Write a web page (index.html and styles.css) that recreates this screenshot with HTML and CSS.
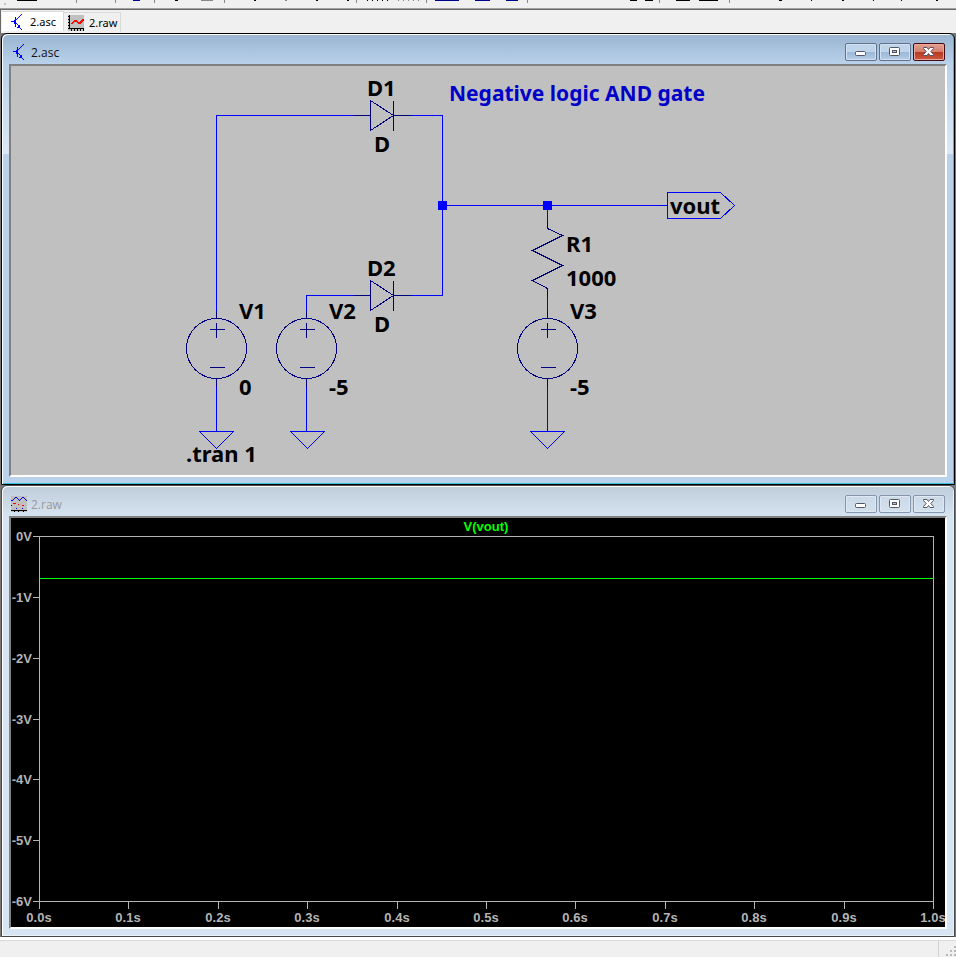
FILE: index.html
```html
<!DOCTYPE html>
<html lang="en">
<head>
<meta charset="utf-8">
<title>2.asc</title>
<link rel="stylesheet" href="styles.css">
</head>
<body>
<svg class="defs" width="0" height="0" aria-hidden="true">
  <symbol id="icon-schematic" viewBox="0 0 16 16">
    <path d="M2 7h4v1H2zM6 3h1v10H6zM5 6h1v4H5zM7 5h1v1H7zM8 4h1v1H8zM9 3h1v1H9zM10 2h1v1h-1zM11 1h1v1h-1zM12 0h1v1h-1zM7 9h1v1H7zM8 10h1v1H8zM9 11h1v1H9zM10 11h1v3h-1zM8 13h3v1H8zM9 12h1v1H9zM11 14h1v1h-1zM12 15h1v1h-1z" fill="#00f"/>
  </symbol>
  <symbol id="icon-waveform" viewBox="0 0 16 16">
    <path fill="#c0c0c0" d="M0 0h16v16H0z"/>
    <path d="M1 0h1v13h14v1H1zM0 1h2v1H0zM0 4h2v1H0zM0 7h2v1H0zM0 10h2v1H0zM0 13h16v1H0zM3 14h1v2H3zM6 14h1v2H6zM9 14h1v2H9zM12 14h1v2h-1zM15 14h1v2h-1z"/>
    <path d="M3 8h1V7h1V6h1V5h3v1h1v1h2V6h1V5h1V4h2v2h-1v1h-1v1h-1v1h-3V8H9V7H6v1H5v1H3z" fill="red"/>
  </symbol>
  <symbol id="icon-traces" viewBox="0 0 16 16">
    <path fill="#c0c0c0" d="M0 0h16v16H0z"/>
    <path d="M0 4h1v1H0zM1 4h1v1H1zM2 3h1v1H2zM3 2h1v1H3zM4 1h2v1H4zM6 2h1v1H6zM7 3h1v1H7zM8 4h1v1H8zM9 3h1v1H9zM10 2h1v1h-1zM11 1h2v1h-2zM13 2h1v1h-1zM14 3h1v1h-1zM15 4h1v1h-1zM5 12h1v1H5zM11 12h1v1h-1z" fill="#00f"/>
    <path d="M2 7h3v1H2zM7 8h1v1H7zM11 9h2v1h-2z" fill="red"/>
    <path d="M0 14h16v1H0zM0 9h1v1H0zM3 15h1v1H3zM7 15h1v1H7zM12 15h1v1h-1z"/>
  </symbol>
  <symbol id="icon-minimize" viewBox="0 0 12 12">
    <rect x="0.500" y="5.500" width="10" height="4" rx="1" fill="#fff" stroke="#535666"/>
  </symbol>
  <symbol id="icon-maximize" viewBox="0 0 12 12">
    <rect x="0.500" y="1.500" width="10" height="8" rx="1" fill="#fff" stroke="#535666"/>
    <rect x="3.500" y="4.500" width="4" height="2" fill="#a9c4df" stroke="#535666"/>
  </symbol>
  <symbol id="icon-close" viewBox="0 0 12 12">
    <path d="M0.500 1.500h3.500l1.500 2 1.500-2h3.500v1L7.800 5.500l2.700 3v1H7l-1.500-2-1.500 2H0.500v-1l2.700-3-2.700-3z" fill="#fff" stroke="#535666"/>
  </symbol>
</svg>

<div class="toolbar">
  <svg width="956" height="6" shape-rendering="crispEdges" aria-hidden="true">
    <path fill="#888" d="M76 0h1v3h-1zM115 0h1v3h-1zM154 0h1v3h-1zM224 0h1v3h-1zM356 0h1v3h-1zM426 0h1v3h-1zM527 0h1v3h-1zM659 0h1v3h-1zM729 0h1v3h-1zM201 0h12v1h-12zM285 0h2v1h-2zM398 0h1v1h-1zM403 0h1v1h-1zM408 0h1v1h-1zM413 0h1v1h-1zM418 0h1v1h-1z"/>
    <path d="M17 0h20v1H17zM175 0h3v1h-3zM254 0h2v1h-2zM316 0h2v1h-2zM347 0h2v1h-2zM367 0h1v1h-1zM372 0h1v1h-1zM377 0h1v1h-1zM382 0h1v1h-1zM387 0h1v1h-1zM630 0h7v1h-7zM645 0h8v1h-8zM676 0h14v1h-14zM699 0h19v1h-19zM779 0h3v1h-3zM811 0h1v1h-1zM842 0h2v1h-2zM873 0h1v1h-1zM901 0h1v1h-1zM936 0h2v1h-2z"/>
    <path fill="#00008b" d="M133 0h7v1h-7zM435 0h24v1h-24zM475 0h15v1h-15zM506 0h12v1h-12z"/>
    <path fill="#c4c4c4" d="M4 3h2v2H4z"/>
  </svg>
</div>

<nav class="tabs" aria-label="Open documents">
  <button class="tab tab-active" type="button"><svg class="icon"><use href="#icon-schematic"/></svg>2.asc</button>
  <button class="tab" type="button"><svg class="icon"><use href="#icon-waveform"/></svg>2.raw</button>
</nav>

<main class="workspace">
  <section class="window window-active">
    <header class="titlebar">
      <svg class="icon"><use href="#icon-schematic"/></svg>
      <h1 class="title">2.asc</h1>
      <div class="controls">
        <button class="control" type="button" aria-label="Minimize"><svg class="glyph"><use href="#icon-minimize"/></svg></button>
        <button class="control" type="button" aria-label="Maximize"><svg class="glyph"><use href="#icon-maximize"/></svg></button>
        <button class="control control-close" type="button" aria-label="Close"><svg class="glyph"><use href="#icon-close"/></svg></button>
      </div>
    </header>
    <div class="client">
      <svg class="drawing schematic" viewBox="11 66 934 409" preserveAspectRatio="xMinYMin meet">
        <defs>
          <g id="source">
            <circle r="30"/>
            <path d="M0-38V-30M-7-19H8M0-26V-11M-7 19H8M0 30V38"/>
          </g>
          <g id="diode"><path d="M-29 0H-12M11 0H29M-12-15V15L11 0ZM11-15V15"/></g>
          <path id="ground" d="M-17 0H17L0 17Z"/>
        </defs>
        <g class="lines" transform="translate(0.500 0.500)">
          <path class="wire" d="M216 318V115H353M411 115H442V295H411M353 295H306V318M442 205H667M547 205V220M547 296V318M216 378V431M306 378V431M547 378V431"/>
          <path class="wire" d="M667 192H720L734 205L720 218H667Z"/>
          <use class="wire" href="#ground" x="216" y="431"/>
          <use class="wire" href="#ground" x="307" y="431"/>
          <use class="wire" href="#ground" x="547" y="431"/>
          <use class="part" href="#diode" x="382" y="115"/>
          <use class="part" href="#diode" x="382" y="295"/>
          <use class="part" href="#source" x="216" y="348"/>
          <use class="part" href="#source" x="306" y="348"/>
          <use class="part" href="#source" x="547" y="348"/>
          <path class="part" d="M547 220V228L562 235L532 250L562 265L532 280L547 288V296"/>
        </g>
        <path class="node" d="M438 201h9v9h-9zM543 201h9v9h-9z"/>
        <text class="comment" x="449" y="101">Negative logic AND gate</text>
        <text x="367" y="96">D1</text>
        <text x="374" y="152">D</text>
        <text x="367" y="276">D2</text>
        <text x="374" y="332">D</text>
        <text x="239" y="319">V1</text>
        <text x="239" y="395">0</text>
        <text x="329" y="319">V2</text>
        <text x="329" y="395">-5</text>
        <text x="566" y="252">R1</text>
        <text x="566" y="286">1000</text>
        <text x="570" y="319">V3</text>
        <text x="570" y="395">-5</text>
        <text x="670" y="214">vout</text>
        <text x="186" y="462">.tran 1</text>
      </svg>
    </div>
  </section>

  <section class="window">
    <header class="titlebar">
      <svg class="icon"><use href="#icon-traces"/></svg>
      <h2 class="title">2.raw</h2>
      <div class="controls">
        <button class="control" type="button" aria-label="Minimize"><svg class="glyph"><use href="#icon-minimize"/></svg></button>
        <button class="control" type="button" aria-label="Maximize"><svg class="glyph"><use href="#icon-maximize"/></svg></button>
        <button class="control" type="button" aria-label="Close"><svg class="glyph"><use href="#icon-close"/></svg></button>
      </div>
    </header>
    <div class="client">
      <svg class="drawing plot" viewBox="11 518 934 409" preserveAspectRatio="xMinYMin meet">
        <g class="lines axis" transform="translate(0.500 0.500)">
          <path d="M39 536H933V901H39Z"/>
          <path d="M32 536H39M32 597H39M32 658H39M32 719H39M32 779H39M32 840H39M32 901H39"/>
          <path d="M39 901V908M128 901V908M218 901V908M307 901V908M397 901V908M486 901V908M575 901V908M665 901V908M754 901V908M844 901V908M933 901V908"/>
          <path class="trace" d="M39 578H933"/>
        </g>
        <text class="trace-name" x="486" y="531">V(vout)</text>
        <g class="y-labels">
          <text x="32" y="541">0V</text>
          <text x="32" y="602">-1V</text>
          <text x="32" y="663">-2V</text>
          <text x="32" y="724">-3V</text>
          <text x="32" y="784">-4V</text>
          <text x="32" y="845">-5V</text>
          <text x="32" y="906">-6V</text>
        </g>
        <g class="x-labels">
          <text x="39" y="922">0.0s</text>
          <text x="128" y="922">0.1s</text>
          <text x="218" y="922">0.2s</text>
          <text x="307" y="922">0.3s</text>
          <text x="397" y="922">0.4s</text>
          <text x="486" y="922">0.5s</text>
          <text x="575" y="922">0.6s</text>
          <text x="665" y="922">0.7s</text>
          <text x="754" y="922">0.8s</text>
          <text x="844" y="922">0.9s</text>
          <text x="933" y="922">1.0s</text>
        </g>
      </svg>
    </div>
  </section>
</main>

<footer class="statusbar">
  <svg class="grip" width="18" height="16" aria-hidden="true"><path fill="#b8b8b8" d="M15 5h2v2h-2zM15 9h2v2h-2zM11 9h2v2h-2zM15 13h2v2h-2zM11 13h2v2h-2zM7 13h2v2H7z"/></svg>
</footer>
</body>
</html>
```
FILE: styles.css
```css
* {
  box-sizing: border-box;
}

body {
  display: flex;
  flex-direction: column;
  height: 100vh;
  margin: 0;
  overflow: hidden;
  background: #f0f0f0;
  font-family: "Open Sans", "Noto Sans", sans-serif;
  font-size: 12px;
}

button {
  margin: 0;
  padding: 0;
  font: inherit;
}

svg {
  display: block;
}

.defs {
  position: absolute;
}

.toolbar {
  flex: none;
  height: 10px;
  overflow: hidden;
  border-bottom: 1px solid #696969;
  box-shadow: inset 0 -1px #a0a0a0;
}

.tabs {
  display: flex;
  flex: none;
  align-items: flex-start;
  height: 23px;
  padding-left: 1px;
  border-left: 1px solid #696969;
  font-family: "Noto Sans", sans-serif;
  font-size: 11px;
}

.tab {
  display: flex;
  align-items: center;
  gap: 5px;
  height: 20px;
  margin-top: 2px;
  padding: 0 3px 0 4px;
  border: 1px solid #d9d9d9;
  border-width: 1px 1px 0 0;
  background: #f0f0f0;
}

.tab-active {
  margin-top: 1px;
  padding: 0 7px;
  background: #fff;
}

.icon {
  flex: none;
  width: 16px;
  height: 16px;
  shape-rendering: crispEdges;
}

.workspace {
  display: flex;
  flex: 1;
  flex-direction: column;
  min-height: 0;
  background: #777;
}

.window {
  display: flex;
  flex: 1;
  flex-direction: column;
  min-height: 0;
  margin: 0 1px;
  padding: 0 7px 7px;
  border: 1px solid #46484b;
  border-radius: 6px 6px 0 0;
  background: linear-gradient(#bfcddb, #d7e4f2 32px);
  box-shadow: inset 1px 1px #fff, inset -1px -1px #e8f2fb;
}

.window-active {
  border-color: #000;
  background: linear-gradient(#99b4d1, #b9d1ea 30px, #dce8f5 120px, #b9d1ea 120px);
  box-shadow: inset 1px 1px #fff, inset -1px -1px #35c1dc;
}

.titlebar {
  display: flex;
  flex: none;
  align-items: center;
  gap: 4px;
  height: 30px;
  padding: 6px 2px 0;
}

.title {
  flex: 1;
  margin: 0;
  color: #9a9a9a;
  font-size: 12px;
  font-weight: 400;
}

.window-active .title {
  color: #111;
}

.controls {
  display: flex;
  gap: 2px;
}

.control {
  display: flex;
  align-items: center;
  justify-content: center;
  width: 32px;
  height: 18px;
  border: 1px solid #8595ad;
  border-radius: 2px;
  background: linear-gradient(#cbd9e7, #d3e0ee);
  box-shadow: inset 0 0 0 1px #dfe9f4;
}

.window-active .control {
  border-color: #61728d;
  background: linear-gradient(#c1d5ea 50%, #9ab7d5 50%, #b5cee8);
  box-shadow: inset 0 0 0 1px #d3e2f2;
}

.window-active .control-close {
  border-color: #430b12;
  background: linear-gradient(#e3a092, #d47d6c 50%, #b8371f 50%, #cb5a40);
  box-shadow: inset 0 0 0 1px #e9a89b;
}

.glyph {
  width: 12px;
  height: 12px;
}

.client {
  flex: 1;
  min-height: 0;
  border: 2px solid #a0a0a0;
  border-color: #808080 #fff #fff #808080;
}

.drawing {
  width: 100%;
  height: 100%;
}

.schematic {
  background: #c0c0c0;
  font-family: "Noto Sans", "Open Sans", sans-serif;
  font-size: 22px;
  font-weight: 700;
}

.lines {
  fill: none;
  stroke-width: 1px;
  shape-rendering: crispEdges;
}

.wire {
  stroke: #00f;
}

.part {
  stroke: #000080;
}

.node {
  fill: #00f;
}

.comment {
  fill: #0000c8;
  font-size: 21px;
}

.plot {
  background: #000;
  fill: #b4b4b4;
  font-family: "Liberation Sans", Arial, sans-serif;
  font-size: 13px;
  font-weight: 700;
}

.axis {
  stroke: #b4b4b4;
}

.trace {
  stroke: #00ff00;
}

.trace-name {
  fill: #00ff00;
  text-anchor: middle;
}

.y-labels {
  text-anchor: end;
}

.x-labels {
  text-anchor: middle;
}

.statusbar {
  display: flex;
  flex: none;
  align-items: flex-end;
  justify-content: flex-end;
  height: 20px;
  padding-top: 4px;
  border-top: 1px solid #fff;
  box-shadow: inset 0 2px #fff, inset 0 3px #d9d9d9;
}

.grip {
  border-left: 1px solid #d0d0d0;
}
```
